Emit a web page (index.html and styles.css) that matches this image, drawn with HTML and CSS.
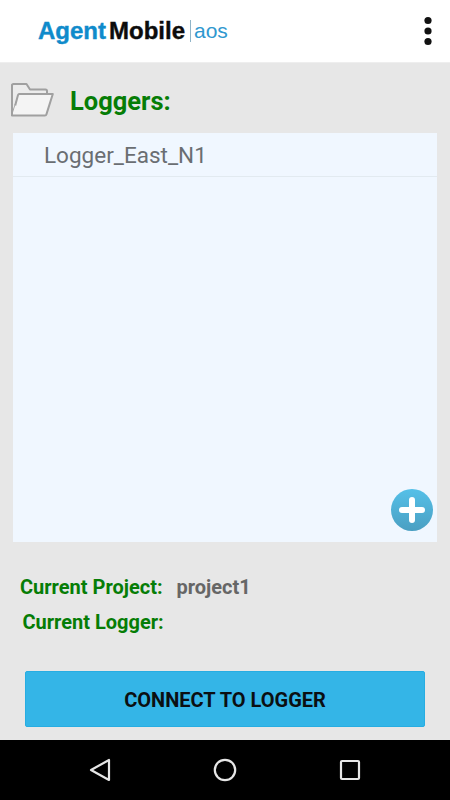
FILE: index.html
```html
<!DOCTYPE html>
<html lang="en">
<head>
    <meta charset="UTF-8">
    <meta name="viewport" content="width=device-width, initial-scale=1.0">
    <title>AgentMobile aos</title>
    <link rel="stylesheet" href="styles.css">
</head>
<body>
    <div class="app">
        <div class="topbar">
            <div class="logo">
                <span class="logo-agent">Agent</span><span class="logo-mobile">Mobile</span><span class="logo-bar"></span><span class="logo-aos">aos</span>
            </div>
            <svg class="menu-icon" width="10" height="32" viewBox="0 0 10 32">
                <circle cx="5" cy="5.5" r="3.6" fill="#111"/>
                <circle cx="5" cy="16" r="3.6" fill="#111"/>
                <circle cx="5" cy="26.5" r="3.6" fill="#111"/>
            </svg>
        </div>

        <div class="content">
            <div class="section-head">
                <svg class="folder-icon" width="44" height="36" viewBox="0 0 44 36">
                    <path d="M2 33V3.5C2 2.6 2.6 2 3.5 2H16.5L20 7.5H35.5C36.5 7.5 37 8.1 37 9V12H9.5L2 33Z" fill="#ececec" stroke="#a0a0a0" stroke-width="2" stroke-linejoin="round"/>
                    <path d="M2 33.5H36L42.5 12H9.5C8.7 12 8.2 12.4 8 13.1L5 24" fill="#f4f4f4"/>
                    <path d="M37 12H42.8L36.4 32.4C36.2 33.1 35.7 33.5 34.9 33.5H2V2.5M37 12H9.5C8.7 12 8.2 12.4 8 13.1L5.2 23.5" fill="none" stroke="#a0a0a0" stroke-width="2" stroke-linejoin="round"/>
                </svg>
                <span class="section-title">Loggers:</span>
            </div>

            <div class="logger-list">
                <div class="logger-row">Logger_East_N1</div>
                <svg class="add-btn" width="44" height="44" viewBox="0 0 44 44">
                    <defs>
                        <linearGradient id="addFill" x1="0" y1="0" x2="0" y2="1">
                            <stop offset="0" stop-color="#55c0e8"/>
                            <stop offset="1" stop-color="#4a9fc2"/>
                        </linearGradient>
                    </defs>
                    <circle cx="22" cy="22" r="21" fill="url(#addFill)"/>
                    <path d="M22 12V32M12 22H32" stroke="#fff" stroke-width="6" stroke-linecap="round"/>
                </svg>
            </div>

            <div class="info">
                <div class="info-row">
                    <span class="info-label label-project">Current Project:</span>
                    <span class="info-value">project1</span>
                </div>
                <div class="info-row">
                    <span class="info-label label-logger">Current Logger:</span>
                </div>
            </div>

            <button class="connect-btn">CONNECT TO LOGGER</button>
        </div>

        <div class="navbar">
            <svg width="22" height="24" viewBox="0 0 22 24">
                <path d="M20 2V22L2 12Z" fill="none" stroke="#e6e6e6" stroke-width="2.2" stroke-linejoin="round"/>
            </svg>
            <svg width="24" height="24" viewBox="0 0 24 24">
                <circle cx="12" cy="12" r="10.2" fill="none" stroke="#e6e6e6" stroke-width="2.2"/>
            </svg>
            <svg width="22" height="22" viewBox="0 0 22 22">
                <rect x="2" y="2" width="18" height="18" rx="1" fill="none" stroke="#e6e6e6" stroke-width="2.2"/>
            </svg>
        </div>
    </div>
</body>
</html>
```

FILE: styles.css
```css
html, body {
    margin: 0;
    padding: 0;
}

body {
    font-family: Roboto, sans-serif;
    background-color: #e7e7e7;
}

.app {
    width: 450px;
    height: 800px;
    display: flex;
    flex-direction: column;
    overflow: hidden;
}

.topbar {
    height: 63px;
    flex-shrink: 0;
    box-sizing: border-box;
    padding: 0 17px 0 38px;
    background-color: #fff;
    border-bottom: 1px solid #eee;
    display: flex;
    align-items: center;
    justify-content: space-between;
}

.logo {
    display: flex;
    align-items: center;
    font-family: "Liberation Sans", Arial, sans-serif;
    font-size: 24px;
    line-height: 26px;
}

.logo-agent {
    color: #0f8bcb;
    font-weight: 700;
    margin-right: 3px;
    -webkit-text-stroke: 0.4px #0f8bcb;
}

.logo-mobile {
    color: #0c0c0c;
    font-weight: 700;
    -webkit-text-stroke: 0.4px #0c0c0c;
}

.logo-bar {
    width: 1px;
    height: 22px;
    margin: 0 3px 0 5px;
    background-color: #8fb4c8;
}

.logo-aos {
    color: #2f98cf;
    font-size: 21px;
}

.content {
    flex: 1;
    display: flex;
    flex-direction: column;
}

.section-head {
    height: 70px;
    box-sizing: border-box;
    padding: 6px 0 0 10px;
    display: flex;
    align-items: center;
    gap: 16px;
}

.folder-icon {
    margin-top: -2px;
}

.section-title {
    color: #067d06;
    font-size: 25.5px;
    font-weight: 700;
}

.logger-list {
    position: relative;
    height: 409px;
    margin: 0 13px;
    background-color: #f0f7ff;
}

.logger-row {
    height: 44px;
    box-sizing: border-box;
    padding-left: 31px;
    border-bottom: 1px solid #e2eaf0;
    color: #6a6e72;
    font-size: 22.5px;
    line-height: 45px;
}

.add-btn {
    position: absolute;
    right: 3px;
    bottom: 10px;
}

.info {
    margin-top: 27px;
    height: 87px;
}

.info-row {
    display: flex;
    align-items: center;
    height: 35px;
    font-size: 20px;
    font-weight: 700;
}

.info-label {
    color: #067d06;
}

.label-project {
    margin-left: 20px;
}

.label-logger {
    margin-left: 22.5px;
}

.info-value {
    margin-left: 14px;
    color: #666;
}

.connect-btn {
    height: 56px;
    margin: 15px 25px 0;
    padding: 2px 0 0;
    background-color: #34b5e7;
    border: 1px solid #27ade2;
    border-radius: 2px;
    color: #0b0f12;
    font-family: Roboto, sans-serif;
    font-size: 20px;
    font-weight: 700;
}

.navbar {
    height: 60px;
    flex-shrink: 0;
    box-sizing: border-box;
    padding: 0 89px;
    background-color: #000;
    display: flex;
    align-items: center;
    justify-content: space-between;
}
```
